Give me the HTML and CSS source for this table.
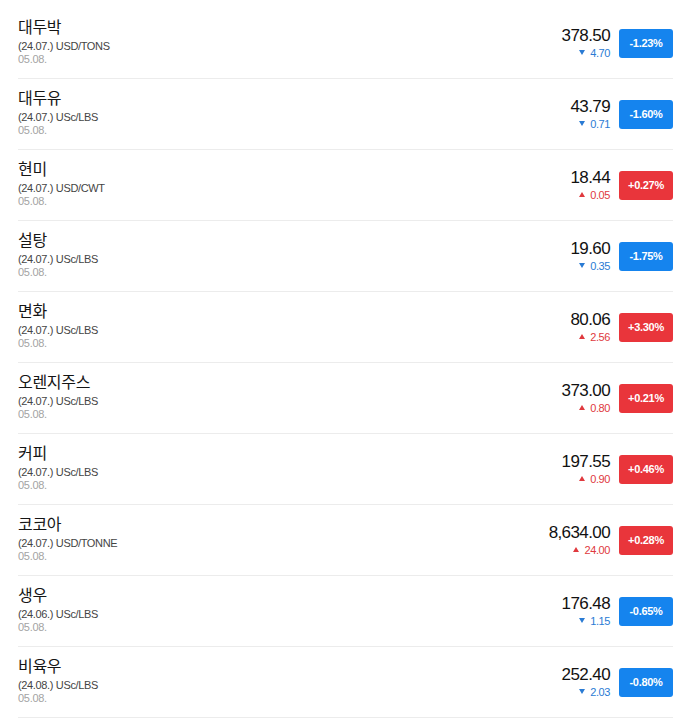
FILE: index.html
```html
<!DOCTYPE html>
<html lang="ko">
<head>
<meta charset="utf-8">
<link rel="stylesheet" href="styles.css">
</head>
<body>
<ul class="list">
  <li class="row"><div class="info"><div class="name">대두박</div><div class="unit">(24.07.) USD/TONS</div><div class="date">05.08.</div></div><div class="quote"><div class="price">378.50</div><div class="chg down"><i class="arr"></i>4.70</div></div><div class="badge down">-1.23%</div></li>
  <li class="row"><div class="info"><div class="name">대두유</div><div class="unit">(24.07.) USc/LBS</div><div class="date">05.08.</div></div><div class="quote"><div class="price">43.79</div><div class="chg down"><i class="arr"></i>0.71</div></div><div class="badge down">-1.60%</div></li>
  <li class="row"><div class="info"><div class="name">현미</div><div class="unit">(24.07.) USD/CWT</div><div class="date">05.08.</div></div><div class="quote"><div class="price">18.44</div><div class="chg up"><i class="arr"></i>0.05</div></div><div class="badge up">+0.27%</div></li>
  <li class="row"><div class="info"><div class="name">설탕</div><div class="unit">(24.07.) USc/LBS</div><div class="date">05.08.</div></div><div class="quote"><div class="price">19.60</div><div class="chg down"><i class="arr"></i>0.35</div></div><div class="badge down">-1.75%</div></li>
  <li class="row"><div class="info"><div class="name">면화</div><div class="unit">(24.07.) USc/LBS</div><div class="date">05.08.</div></div><div class="quote"><div class="price">80.06</div><div class="chg up"><i class="arr"></i>2.56</div></div><div class="badge up">+3.30%</div></li>
  <li class="row"><div class="info"><div class="name">오렌지주스</div><div class="unit">(24.07.) USc/LBS</div><div class="date">05.08.</div></div><div class="quote"><div class="price">373.00</div><div class="chg up"><i class="arr"></i>0.80</div></div><div class="badge up">+0.21%</div></li>
  <li class="row"><div class="info"><div class="name">커피</div><div class="unit">(24.07.) USc/LBS</div><div class="date">05.08.</div></div><div class="quote"><div class="price">197.55</div><div class="chg up"><i class="arr"></i>0.90</div></div><div class="badge up">+0.46%</div></li>
  <li class="row"><div class="info"><div class="name">코코아</div><div class="unit">(24.07.) USD/TONNE</div><div class="date">05.08.</div></div><div class="quote"><div class="price">8,634.00</div><div class="chg up"><i class="arr"></i>24.00</div></div><div class="badge up">+0.28%</div></li>
  <li class="row"><div class="info"><div class="name">생우</div><div class="unit">(24.06.) USc/LBS</div><div class="date">05.08.</div></div><div class="quote"><div class="price">176.48</div><div class="chg down"><i class="arr"></i>1.15</div></div><div class="badge down">-0.65%</div></li>
  <li class="row"><div class="info"><div class="name">비육우</div><div class="unit">(24.08.) USc/LBS</div><div class="date">05.08.</div></div><div class="quote"><div class="price">252.40</div><div class="chg down"><i class="arr"></i>2.03</div></div><div class="badge down">-0.80%</div></li>
</ul>
</body>
</html>
```
FILE: styles.css
```css
html, body {
  margin: 0;
  padding: 0;
  background: #fff;
}
body {
  font-family: "Liberation Sans", Arial, "Noto Sans CJK KR", sans-serif;
  color: #111;
}
.list {
  list-style: none;
  margin: 0 0 0 18px;
  padding: 8px 0 0 0;
  width: 655px;
}
.row {
  display: flex;
  align-items: center;
  height: 70px;
  border-bottom: 1px solid #ececec;
}
.info {
  flex: 1;
  align-self: flex-start;
  padding-top: 11px;
}
.name {
  font-family: "Liberation Sans", "Noto Sans CJK KR", sans-serif;
  font-size: 16px;
  line-height: 18px;
  letter-spacing: -0.3px;
  color: #151515;
}
.unit {
  font-size: 11px;
  line-height: 12px;
  letter-spacing: -0.35px;
  color: #444;
  margin-top: 3px;
}
.date {
  font-size: 11px;
  line-height: 12px;
  letter-spacing: -0.3px;
  color: #a3a3a3;
  margin-top: 1px;
}
.quote {
  text-align: right;
  margin-right: 9px;
}
.price {
  font-size: 17px;
  line-height: 18px;
  letter-spacing: -0.6px;
  color: #111;
}
.chg {
  font-size: 11px;
  line-height: 12px;
  letter-spacing: -0.4px;
  margin-top: 2px;
}
.arr {
  display: inline-block;
  width: 0;
  height: 0;
  border-left: 3px solid transparent;
  border-right: 3px solid transparent;
  margin-right: 5px;
}
.chg.down { color: #2a7bd4; }
.chg.up { color: #e0393e; }
.chg.down .arr {
  border-top: 5px solid #2a7bd4;
  vertical-align: 2px;
}
.chg.up .arr {
  border-bottom: 5px solid #e0393e;
  vertical-align: 2px;
}
.badge {
  width: 54px;
  height: 29px;
  border-radius: 3px;
  color: #fff;
  font-size: 11px;
  font-weight: bold;
  letter-spacing: -0.3px;
  display: flex;
  align-items: center;
  justify-content: center;
}
.badge.down { background: #1584ee; }
.badge.up { background: #e9353b; }
```
